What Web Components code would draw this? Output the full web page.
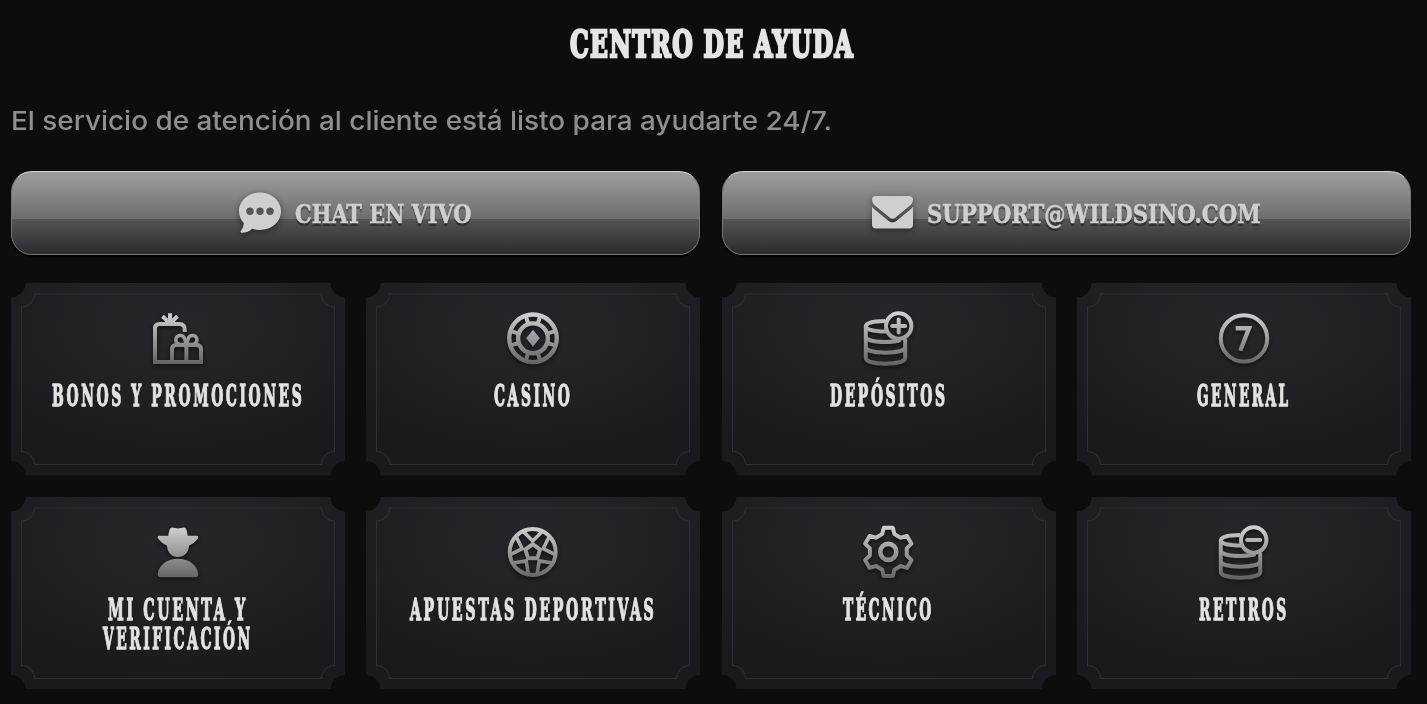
<!DOCTYPE html>
<html lang="es">
<head>
<meta charset="utf-8">
<title>Centro de ayuda</title>
<style>
  body {
    margin: 0;
    background: #0d0d0d;
    font-family: Inter, "Liberation Sans", sans-serif;
  }
</style>
</head>
<body>
<help-center></help-center>

<script>
// repeats a piece of svg around the origin
const spin = (markup, angles) =>
  angles.map((a) => `<g transform="rotate(${a})">${markup}</g>`).join("");

// outline of the gear, six teeth
const gearPath = () => {
  const points = [];
  for (let k = 0; k < 6; k++) {
    for (const [r, a] of [[18.8, -19], [24.6, -10.5], [24.6, 10.5], [18.8, 19]]) {
      const t = ((k * 60 + a - 90) * Math.PI) / 180;
      points.push(`${(r * Math.cos(t)).toFixed(2)} ${(r * Math.sin(t)).toFixed(2)}`);
    }
  }
  return `M${points.join("L")}Z`;
};

const coins = `
  <path d="M28 14C16 14 8.8 16.4 8.8 19.6c0 3 8.5 5 20.5 5"/>
  <path d="M8.8 19.5V51c0 3.6 9 5.7 19.7 5.7S48.2 54.6 48.2 51V32"/>
  <path d="M8.8 29.5c0 3.6 9 5.5 19.7 5.5 5.500 0 11-.7 15-2"/>
  <path d="M8.8 40c0 3.6 9 5.7 19.7 5.7S48.2 43.6 48.2 40"/>
  <circle cx="41.7" cy="19" r="12.7"/>`;

const icons = {
  gifts: `
    <path d="M38.7 25v-2.500c0-3.600-1.800-5.500-5.200-5.500H13.500C10.500 17 9 18.500 9 21.500V55h46V42.500c0-3-1.500-4.500-4.500-4.500h-20c-3 0-4.500 1.500-4.500 4.500V55M40.400 38v17"/>
    <path d="M40.4 37.500h-6a4.500 4.500 0 1 1 4.300-5.500z M40.4 37.500h6a4.500 4.500 0 1 0-4.300-5.500z" stroke-width="3.6"/>
    <path d="M24 16V6.300M23 15.500L16.500 9.300M25 15.500L31.500 9.300M19 15.500h10" stroke-width="4"/>`,
  chip: `
    <g transform="translate(32 31.3)">
      <circle r="23.8" stroke-width="4.4"/><circle r="14.900" stroke-width="4.4"/>
      ${spin('<path d="M0-16v-7" stroke-width="4"/>', [18, 72, 108, 162, 198, 252, 288, 342])}
      <path class="solid" d="M0-8.500L6.800 0 0 8.500-6.800 0z"/>
    </g>`,
  deposit: `${coins}<path d="M41.7 12.500v13M35.200 19h13" stroke-linecap="round"/>`,
  withdraw: `${coins}<path d="M35.2 19h13" stroke-linecap="round"/>`,
  seven: `
    <circle cx="32" cy="31.4" r="23.2"/>
    <path d="M23.700 21.200h13.300L28.300 43.800" stroke-width="4.4"/>`,
  account: `
    <path class="solid" d="M22.3 14.700c.6-4.500 1.400-8 3.600-8.200 2-.2 4 .9 6.100.9s4.100-1.100 6.100-.9c2.200.2 3 3.700 3.600 8.200h8.500c2.400 0 2.700 1.400 1.500 3-2.100 2.800-5 5.300-8.700 7.100C42.800 31.500 38.300 36 32 36s-10.800-4.500-11-11.200c-3.700-1.800-6.600-4.300-8.700-7.100-1.200-1.600-.9-3 1.500-3z"/>
    <path class="solid" d="M14.6 56.300c-2 0-3-1.100-2.900-3C12.300 44.500 21 37.700 32 37.700s19.700 6.800 20.300 15.600c.1 1.900-.9 3-2.900 3z"/>`,
  ball: `
    <g transform="translate(31.7 31)">
      <circle r="23"/>
      ${spin('<path d="M-9.500-20.500L0-11 9.500-20.500" stroke-width="3.6"/>', [0, 72, 144, 216, 288])}
      <path d="M0-7.800L7.400-2.400 4.600 6.300H-4.600L-7.400-2.400z"/>
    </g>`,
  gear: `
    <g transform="translate(31.3 30.9)">
      <path d="${gearPath()}" stroke-linejoin="round"/>
      <circle r="8" stroke-width="4.6"/>
    </g>`,
};

// text drawn to an exact width, so condensed lettering keeps its measure
class FitText extends HTMLElement {
  constructor() {
    super();
    this.attachShadow({ mode: "open" });
    this.shadowRoot.innerHTML = `
      <style>
        :host { display: block; white-space: nowrap; }
        span { display: inline-block; transform-origin: 0 50%; }
      </style>
      <span><slot></slot></span>`;
  }
  connectedCallback() {
    const span = this.shadowRoot.querySelector("span");
    const width = Number(this.getAttribute("width"));
    this.style.width = width + "px";
    const spacing = parseFloat(getComputedStyle(this).letterSpacing) || 0;
    span.style.transform = `scaleX(${width / (span.offsetWidth - spacing)})`;
  }
}

class HelpIcon extends HTMLElement {
  constructor() {
    super();
    this.attachShadow({ mode: "open" });
  }
  connectedCallback() {
    // the strokes form a mask, so one gradient runs down the whole icon
    this.shadowRoot.innerHTML = `
      <style>
        :host { display: block; width: 64px; height: 64px; }
        svg { display: block; filter: drop-shadow(0 2px 2px rgba(0, 0, 0, .55)); }
        .art { fill: none; stroke: #fff; stroke-width: 4; }
        .solid { fill: #fff; stroke: none; }
      </style>
      <svg width="64" height="64" viewBox="0 0 64 64">
        <defs>
          <linearGradient id="metal" gradientUnits="userSpaceOnUse" x1="0" y1="5" x2="0" y2="58">
            <stop offset="0" stop-color="#d2d2d2"/>
            <stop offset="1" stop-color="#626262"/>
          </linearGradient>
          <mask id="shape" maskUnits="userSpaceOnUse" x="0" y="0" width="64" height="64">
            <g class="art">${icons[this.getAttribute("name")]}</g>
          </mask>
        </defs>
        <rect width="64" height="64" fill="url(#metal)" mask="url(#shape)"/>
      </svg>`;
  }
}

class ContactButton extends HTMLElement {
  constructor() {
    super();
    this.attachShadow({ mode: "open" });
    this.shadowRoot.innerHTML = `
      <style>
        :host { display: block; flex: 1; }
        button {
          display: flex;
          align-items: center;
          justify-content: center;
          gap: 14px;
          box-sizing: border-box;
          width: 100%;
          height: 84px;
          padding: 0;
          border: 1px solid #777;
          border-top-color: #d5d5d5;
          border-radius: 21px;
          background: linear-gradient(#9e9e9e, #6d6d6d 57.3%, #545454 57.3%, #292a2e) border-box;
          box-shadow: 0 2px 2px #000;
          color: #cfcfcf;
          font: bold 26px/40px "DejaVu Serif Condensed", "DejaVu Serif", serif;
          text-transform: uppercase;
          text-shadow: 0 3px 1px rgba(0, 0, 0, .4);
          -webkit-text-stroke: .5px #cfcfcf;
        }
        ::slotted(svg) {
          fill: #cfcfcf;
          filter: drop-shadow(0 2px 3px rgba(0, 0, 0, .45));
        }
        ::slotted(fit-text) { margin-top: 2px; }
      </style>
      <button><slot name="icon"></slot><slot></slot></button>`;
  }
}

class TopicTile extends HTMLElement {
  constructor() {
    super();
    this.attachShadow({ mode: "open" });
    this.shadowRoot.innerHTML = `
      <style>
        :host { display: grid; height: 192.5px; }
        svg, .content { grid-area: 1 / 1; }
        svg { display: block; width: 100%; height: 192.5px; }
        .content {
          z-index: 1;
          display: flex;
          flex-direction: column;
          align-items: center;
          gap: 10px;
          padding-top: 24px;
        }
        .name {
          display: flex;
          flex-direction: column;
          align-items: center;
          padding-right: 3px;
          color: #e3e3e4;
          font: bold 30px/29px "DejaVu Serif Condensed", "DejaVu Serif", serif;
          letter-spacing: 5px;
          text-transform: uppercase;
          -webkit-text-stroke: 1.3px #e3e3e4;
        }
      </style>
      <svg viewBox="0 0 334 192.5" preserveAspectRatio="none">
        <defs>
          <radialGradient id="felt" cx=".5" cy=".22" r=".72">
            <stop offset="0" stop-color="#26272b"/>
            <stop offset=".5" stop-color="#202125"/>
            <stop offset="1" stop-color="#191a1e"/>
          </radialGradient>
        </defs>
        <path fill="url(#felt)" d="M14.5 0H319.5A14.5 14.5 0 0 0 334 14.5V178A14.5 14.5 0 0 0 319.5 192.5H14.5A14.5 14.5 0 0 0 0 178V14.5A14.5 14.5 0 0 0 14.5 0Z"/>
        <path fill="none" stroke="#2e2f34" d="M23.5 11H310.5A13 13 0 0 0 323.5 24V168.500A13 13 0 0 0 310.5 181.500H23.5A13 13 0 0 0 10.5 168.500V24A13 13 0 0 0 23.5 11Z"/>
      </svg>
      <div class="content">
        <slot name="icon"></slot>
        <div class="name"><slot></slot></div>
      </div>`;
  }
}

class HelpCenter extends HTMLElement {
  constructor() {
    super();
    this.attachShadow({ mode: "open" });
    this.shadowRoot.innerHTML = `
      <style>
        :host { display: block; padding: 24px 16px 15px 11px; }
        h1 {
          display: flex;
          justify-content: center;
          margin: 0;
          color: #e6e5e6;
          font: bold 37px/40px "DejaVu Serif Condensed", "DejaVu Serif", serif;
          letter-spacing: 2px;
          text-transform: uppercase;
          -webkit-text-stroke: 2.4px #e6e5e6;
        }
        p {
          margin: 37px 0 0;
          color: #8f8f8f;
          font-size: 26px;
          font-weight: 500;
          line-height: 40px;
        }
        .contact {
          display: flex;
          gap: 21.3px;
          margin-top: 30px;
        }
        .topics {
          display: grid;
          grid-template-columns: repeat(4, 1fr);
          gap: 21.3px;
          margin-top: 28px;
        }
      </style>
      <h1><fit-text width="283">Centro de ayuda</fit-text></h1>
      <p><fit-text width="821">El servicio de atención al cliente está listo para ayudarte 24/7.</fit-text></p>
      <div class="contact">
        <contact-button>
          <svg slot="icon" width="42" height="42" viewBox="0 0 42 42">
            <path fill-rule="evenodd" d="M21 .5C9.400.5 0 8.800 0 19.200c0 4.400 1.800 8.500 4.800 11.700-.2 3.200-1.300 6-2.900 7.900-.8 1-.3 1.900.9 1.900 4.200 0 7.700-1.600 10.400-4 2.500.8 5.100 1.200 7.800 1.200 11.600 0 21-8.300 21-18.700S32.600.5 21 .5zM11 15.600a3.700 3.700 0 1 1 0 7.400 3.700 3.700 0 0 1 0-7.400zm10 0a3.700 3.700 0 1 1 0 7.400 3.700 3.700 0 0 1 0-7.400zm10 0a3.700 3.700 0 1 1 0 7.400 3.700 3.700 0 0 1 0-7.400z"/>
          </svg>
          <fit-text width="177">Chat en vivo</fit-text>
        </contact-button>
        <contact-button>
          <svg slot="icon" width="41" height="34" viewBox="0 0 41 34">
            <path d="M4 0h33c2.500 0 4 1.500 4 3.500 0 2.500-1.200 4.500-3.200 6.300L23.500 21.500c-2 1.700-4 1.700-6 0L3.200 9.800C1.200 8 0 6 0 3.500 0 1.500 1.500 0 4 0z"/>
            <path d="M0 10.800c.7 1 1.300 1.600 2.300 2.500L16 24.600c3 2.500 6 2.500 9 0l13.700-11.300c1-.9 1.600-1.500 2.300-2.500V28.500c0 2.500-1.500 4-4 4H4c-2.500 0-4-1.500-4-4z"/>
          </svg>
          <fit-text width="334">support@wildsino.com</fit-text>
        </contact-button>
      </div>
      <div class="topics">
        <topic-tile><help-icon slot="icon" name="gifts"></help-icon><fit-text width="250">Bonos y promociones</fit-text></topic-tile>
        <topic-tile><help-icon slot="icon" name="chip"></help-icon><fit-text width="76">Casino</fit-text></topic-tile>
        <topic-tile><help-icon slot="icon" name="deposit"></help-icon><fit-text width="115">Depósitos</fit-text></topic-tile>
        <topic-tile><help-icon slot="icon" name="seven"></help-icon><fit-text width="91">General</fit-text></topic-tile>
        <topic-tile><help-icon slot="icon" name="account"></help-icon><fit-text width="137">Mi cuenta y</fit-text><fit-text width="147">verificación</fit-text></topic-tile>
        <topic-tile><help-icon slot="icon" name="ball"></help-icon><fit-text width="244">Apuestas deportivas</fit-text></topic-tile>
        <topic-tile><help-icon slot="icon" name="gear"></help-icon><fit-text width="88">Técnico</fit-text></topic-tile>
        <topic-tile><help-icon slot="icon" name="withdraw"></help-icon><fit-text width="87">Retiros</fit-text></topic-tile>
      </div>`;
  }
}

customElements.define("help-icon", HelpIcon);
customElements.define("contact-button", ContactButton);
customElements.define("topic-tile", TopicTile);
customElements.define("help-center", HelpCenter);
// last, so that it measures the final styles
customElements.define("fit-text", FitText);
</script>
</body>
</html>
